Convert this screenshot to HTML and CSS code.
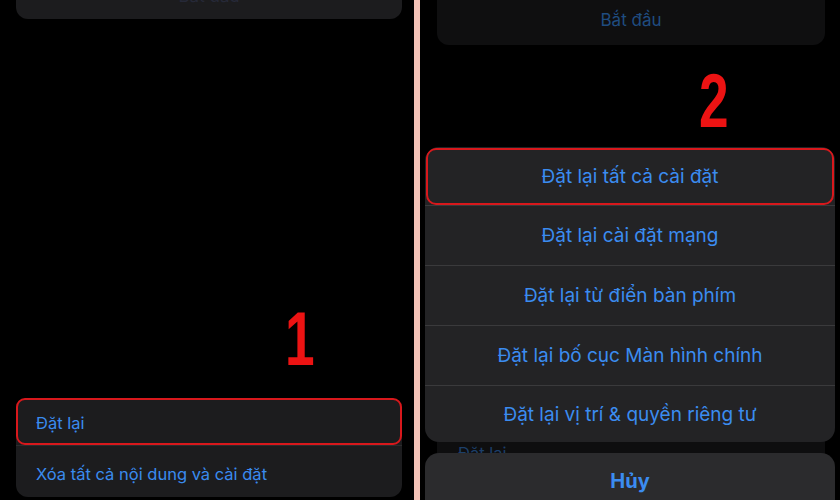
FILE: index.html
```html
<!DOCTYPE html>
<html lang="vi">
<head>
<meta charset="utf-8">
<link rel="stylesheet" href="styles.css">
</head>
<body>
<div class="screen">
  <section class="panel panel-left">
    <div class="card card-top">
      <span class="dim-text left-dim">Bắt đầu</span>
    </div>
    <div class="spacer"></div>
    <div class="card list">
      <div class="row row-first highlighted">Đặt lại</div>
      <div class="sep"></div>
      <div class="row row-second">Xóa tất cả nội dung và cài đặt</div>
    </div>
    <div class="mark mark-1">1</div>
  </section>
  <div class="divider"></div>
  <section class="panel panel-right">
    <div class="card card-top-right">
      <span class="dim-text right-dim">Bắt đầu</span>
    </div>
    <div class="spacer"></div>
    <div class="card list-behind">
      <div class="row behind-row">Đặt lại</div>
    </div>
    <div class="mark mark-2">2</div>
    <div class="sheet">
      <div class="sheet-row highlighted-sheet">Đặt lại tất cả cài đặt</div>
      <div class="sheet-sep"></div>
      <div class="sheet-row">Đặt lại cài đặt mạng</div>
      <div class="sheet-sep"></div>
      <div class="sheet-row">Đặt lại từ điển bàn phím</div>
      <div class="sheet-sep"></div>
      <div class="sheet-row">Đặt lại bố cục Màn hình chính</div>
      <div class="sheet-sep"></div>
      <div class="sheet-row sheet-last">Đặt lại vị trí &amp; quyền riêng tư</div>
    </div>
    <div class="cancel">Hủy</div>
  </section>
</div>
</body>
</html>
```
FILE: styles.css
```css
* { box-sizing: border-box; }
html, body { margin: 0; padding: 0; background: #000; }
body {
  width: 840px;
  height: 500px;
  overflow: hidden;
  font-family: Inter, "Noto Sans", "DejaVu Sans", sans-serif;
  color: #3b8cf0;
}
.screen {
  display: flex;
  width: 840px;
  height: 500px;
}
.panel {
  position: relative;
  display: flex;
  flex-direction: column;
  background: #000;
  overflow: hidden;
}
.panel-left { width: 414px; }
.divider { width: 6px; background: #f3c2b6; }
.panel-right { width: 420px; }
.spacer { flex: 1; }

.card {
  background: #1c1c1e;
  border-radius: 12px;
}
.card-top {
  margin: -30px 12px 0 16px;
  height: 49px;
  display: flex;
  justify-content: center;
  align-items: flex-start;
  padding-top: 16px;
}
.dim-text { font-size: 17px; line-height: 20px; }
.left-dim { color: #262938; }

.list {
  margin: 0 12px 3px 16px;
  display: flex;
  flex-direction: column;
}
.row {
  display: flex;
  align-items: center;
  padding-left: 20px;
  font-size: 16.5px;
  color: #3a8bee;
}
.row-first { height: 47px; padding-top: 2px; }
.row-second { height: 51px; padding-top: 5px; }
.highlighted {
  border: 2px solid #d8181c;
  border-radius: 9px;
  padding-left: 18px;
}
.sep { height: 1px; background: #2c2c2e; margin-left: 0; }

.card-top-right {
  background: #0f0f10;
  margin: -30px 15px 0 17px;
  height: 75px;
  display: flex;
  justify-content: center;
  padding-top: 40px;
}
.right-dim { color: #1f4c80; font-size: 17px; }

.list-behind {
  background: #0e0e0f;
  margin: 0 15px 0 17px;
  height: 120px;
  margin-bottom: -20px;
  padding-top: 43px;
}
.behind-row {
  color: #1c3f69;
  font-size: 16.5px;
  padding-left: 21px;
}

.mark {
  position: absolute;
  font-family: "Liberation Sans", Arial, sans-serif;
  font-weight: 700;
  font-size: 76px;
  line-height: 1;
  color: #ec1313;
  transform-origin: left top;
  transform: scaleX(0.7);
}
.mark-1 { left: 285px; top: 301px; }
.mark-2 { left: 279px; top: 63px; }

.sheet {
  position: absolute;
  left: 5px;
  top: 147px;
  width: 410px;
  background: #232325;
  border-radius: 14px;
  display: flex;
  flex-direction: column;
  overflow: hidden;
}
.sheet-row {
  height: 59px;
  display: flex;
  align-items: center;
  justify-content: center;
  font-size: 19px;
  color: #3b8cf0;
  padding-bottom: 1px;
}
.sheet-last { height: 56px; padding-bottom: 0; }
.highlighted-sheet {
  border: 2px solid #d8181c;
  border-radius: 10px;
  margin: 1px 1px 0 1px;
  height: 57px;
  padding-bottom: 0;
}
.sheet-sep { height: 1px; background: #3a3a3c; }

.cancel {
  position: absolute;
  left: 5px;
  top: 453px;
  width: 410px;
  height: 70px;
  background: #2b2b2d;
  border-radius: 14px;
  display: flex;
  justify-content: center;
  padding-top: 16px;
  font-size: 20px;
  font-weight: 700;
  color: #3b8cf0;
}
```
